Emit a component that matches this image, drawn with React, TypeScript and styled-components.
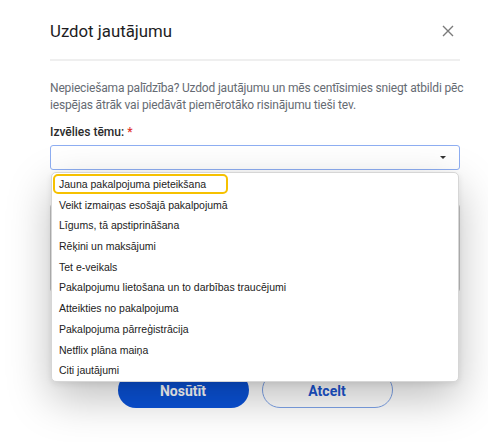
import React from "react";
import styled, { createGlobalStyle } from "styled-components";

const Global = createGlobalStyle`
  html, body { margin: 0; padding: 0; background: #ffffff; }
  body { font-family: Roboto, "Noto Sans", Arial, sans-serif; }
  #root { width: 488px; height: 442px; overflow: hidden; }
`;

const Modal = styled.div`
  display: flex;
  flex-direction: column;
  padding: 17px 28px 0 50px;
  height: 442px;
  box-sizing: border-box;
`;

const Header = styled.div`
  display: flex;
  align-items: center;
  justify-content: space-between;
  height: 28px;
  padding-bottom: 14px;
  border-bottom: 2px solid #efefef;
`;

const Title = styled.h2`
  margin: 0;
  font-size: 16.8px;
  font-weight: 400;
  color: #1d1d1f;
`;

const Close = styled.button`
  border: 0;
  background: none;
  padding: 0;
  margin-right: 6px;
  width: 12px;
  height: 12px;
  display: flex;
  cursor: pointer;
`;

const Intro = styled.p`
  margin: 19px 0 0;
  font-size: 12px;
  letter-spacing: -0.17px;
  line-height: 17px;
  color: #666b73;
  white-space: nowrap;
`;

const Label = styled.label`
  display: block;
  margin-top: 10px;
  font-size: 12px;
  font-weight: 500;
  color: #2b2b2b;
  line-height: 16px;
`;

const Req = styled.span`
  color: #e0342b;
`;

const SelectWrap = styled.div`
  position: relative;
  margin-top: 5px;
`;

const SelectBox = styled.div`
  height: 25px;
  box-sizing: border-box;
  border: 1.5px solid #8eaef2;
  border-radius: 3px;
  display: flex;
  align-items: center;
  justify-content: flex-end;
  padding-right: 13px;
  background: #fff;
`;

const Caret = styled.span`
  width: 0;
  height: 0;
  border-left: 3px solid transparent;
  border-right: 3px solid transparent;
  border-top: 3.5px solid #333;
`;

const List = styled.ul`
  position: absolute;
  z-index: 2;
  left: 1px;
  right: 1px;
  top: 27px;
  margin: 0;
  padding: 1px 0 0;
  list-style: none;
  background: #fff;
  border: 1px solid #d6d6d6;
  border-radius: 5px;
  box-shadow: 0 16px 44px rgba(0, 0, 0, 0.26), 0 2px 6px rgba(0, 0, 0, 0.08);
  font-family: "Liberation Sans", Arial, sans-serif;
  font-size: 10.5px;
  color: #222;
`;

const Item = styled.li<{ $marked?: boolean }>`
  height: 20.7px;
  line-height: 20.7px;
  padding-left: 7px;
  position: relative;
  ${(p) =>
    p.$marked &&
    `&::after {
      content: "";
      position: absolute;
      left: 1px;
      top: 0px;
      width: 171px;
      height: 16px;
      border: 2px solid #f6c100;
      border-radius: 5px;
    }`}
`;

const Hidden = styled.div`
  height: 202px;
  display: flex;
  flex-direction: column;
  padding-top: 34px;
  box-sizing: border-box;
`;

const Area = styled.div`
  height: 86px;
  border: 1px solid #c9c9c9;
  border-radius: 3px;
`;

const Actions = styled.div`
  display: flex;
  justify-content: center;
  gap: 13px;
`;

const Button = styled.button<{ $primary?: boolean }>`
  width: 131px;
  height: 36px;
  border-radius: 18px;
  box-sizing: border-box;
  font-family: Roboto, Arial, sans-serif;
  font-size: 14px;
  font-weight: 700;
  cursor: pointer;
  background: ${(p) => (p.$primary ? "#0a52d8" : "transparent")};
  color: ${(p) => (p.$primary ? "#ffffff" : "#1c55d0")};
  border: ${(p) => (p.$primary ? "none" : "1.5px solid #7ea3e8")};
  padding-top: 2px;
`;

const options = [
  "Jauna pakalpojuma pieteikšana",
  "Veikt izmaiņas esošajā pakalpojumā",
  "Līgums, tā apstiprināšana",
  "Rēķini un maksājumi",
  "Tet e-veikals",
  "Pakalpojumu lietošana un to darbības traucējumi",
  "Atteikties no pakalpojuma",
  "Pakalpojuma pārreģistrācija",
  "Netflix plāna maiņa",
  "Citi jautājumi",
];

export default function App() {
  return (
    <>
      <Global />
      <Modal>
        <Header>
          <Title>Uzdot jautājumu</Title>
          <Close aria-label="Aizvērt">
            <svg width="12" height="12" viewBox="0 0 12 12">
              <path d="M1 1L11 11M11 1L1 11" stroke="#7a7a7a" strokeWidth="1.4" />
            </svg>
          </Close>
        </Header>
        <Intro>
          Nepieciešama palīdzība? Uzdod jautājumu un mēs centīsimies sniegt atbildi pēc
          <br />
          iespējas ātrāk vai piedāvāt piemērotāko risinājumu tieši tev.
        </Intro>
        <Label>
          Izvēlies tēmu: <Req>*</Req>
        </Label>
        <SelectWrap>
          <SelectBox>
            <Caret />
          </SelectBox>
          <List>
            {options.map((o, i) => (
              <Item key={o} $marked={i === 0}>
                {o}
              </Item>
            ))}
          </List>
        </SelectWrap>
        <Hidden>
          <Area />
        </Hidden>
        <Actions>
          <Button $primary>Nosūtīt</Button>
          <Button>Atcelt</Button>
        </Actions>
      </Modal>
    </>
  );
}
